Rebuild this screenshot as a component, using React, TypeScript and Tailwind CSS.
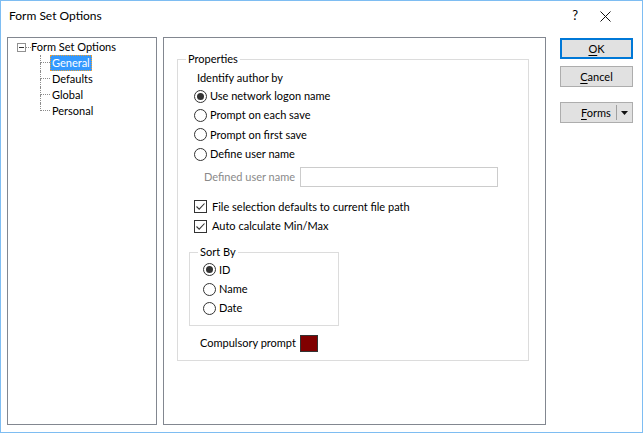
import React from "react"

const font = { fontFamily: 'Lato, "Noto Sans", sans-serif' }

function Radio({ checked, label }: { checked?: boolean; label: string }) {
  return (
    <div className="flex h-[19.4px] items-center">
      <span className="flex h-[13px] w-[13px] items-center justify-center rounded-full border border-[#333333] bg-white">
        {checked && <span className="h-[7px] w-[7px] rounded-full bg-[#333333]" />}
      </span>
      <span className="ml-[3px]">{label}</span>
    </div>
  )
}

function Check({ label }: { label: string }) {
  return (
    <div className="flex h-[19.5px] items-center">
      <span className="flex h-[13px] w-[13px] items-center justify-center border border-[#333333] bg-white">
        <svg width="11" height="11" viewBox="0 0 11 11">
          <path d="M1.5 5.5 L4.2 8.2 L9.5 2.5" fill="none" stroke="#333333" strokeWidth="1.1" />
        </svg>
      </span>
      <span className="ml-[5px]">{label}</span>
    </div>
  )
}

function TreeChild({ label, last, selected }: { label: string; last?: boolean; selected?: boolean }) {
  return (
    <div className="flex h-[16px] items-stretch">
      <div className="flex w-[10px] flex-col">
        <div className="h-[8px] border-b border-l border-dotted border-[#8c8c8c]" />
        <div className={last ? "flex-1" : "flex-1 border-l border-dotted border-[#8c8c8c]"} />
      </div>
      <div className="flex items-center">
        {selected ? (
          <span className="border border-dotted border-[#f0a030] bg-[#3399ff] px-[1px] leading-[14px] text-white">
            {label}
          </span>
        ) : (
          <span className="px-[2px] leading-[14px]">{label}</span>
        )}
      </div>
    </div>
  )
}

export default function App() {
  return (
    <div
      className="flex h-[433px] w-[643px] flex-col border border-[#7ebdf2] bg-white text-[11px] text-black"
      style={font}
    >
      {/* title bar */}
      <div className="flex h-[30px] items-center">
        <span className="ml-[8px] text-[12px]">Form Set Options</span>
        <span className="ml-auto mr-[22px] text-[13px]">?</span>
        <svg className="mr-[31px]" width="11" height="11" viewBox="0 0 11 11">
          <path d="M0.5 0.5 L10.5 10.5 M10.5 0.5 L0.5 10.5" stroke="#111111" strokeWidth="1" />
        </svg>
      </div>

      <div className="flex flex-1 pb-[7px] pl-[6px] pt-[6px]">
        {/* tree */}
        <div className="w-[150px] border border-[#828790] pt-[1px]">
          <div className="flex h-[16px] items-center pl-[9px]">
            <span className="flex h-[9px] w-[9px] items-center justify-center border border-[#919191] bg-white">
              <span className="h-px w-[5px] bg-[#333333]" />
            </span>
            <span className="w-[5px] border-t border-dotted border-[#8c8c8c]" />
            <span className="leading-[14px]">Form Set Options</span>
          </div>
          <div className="ml-[32px]">
            <TreeChild label="General" selected />
            <TreeChild label="Defaults" />
            <TreeChild label="Global" />
            <TreeChild label="Personal" last />
          </div>
        </div>

        {/* main page */}
        <div className="ml-[6px] w-[383px] border border-[#828790] pl-[13px] pt-[13px]">
          <fieldset className="w-[352px] border border-[#dcdcdc] pb-[8px] pl-[11px]">
            <legend className="ml-[-3px] px-[2px] leading-[16px]">Properties</legend>
            <div className="ml-[8px] mt-[3px] leading-[16px]">Identify author by</div>
            <div className="ml-[5px] mt-[0.5px]">
              <Radio checked label="Use network logon name" />
              <Radio label="Prompt on each save" />
              <Radio label="Prompt on first save" />
              <Radio label="Define user name" />
            </div>
            <div className="ml-[15px] mt-[3px] flex h-[20px] items-center">
              <span className="w-[96px] whitespace-nowrap text-[#8a8a8a]">Defined user name</span>
              <span className="h-[20px] w-[198px] border border-[#cccccc] bg-white" />
            </div>
            <div className="ml-[5px] mt-[10px]">
              <Check label="File selection defaults to current file path" />
              <Check label="Auto calculate Min/Max" />
            </div>
            <fieldset className="mt-[8px] w-[150px] border border-[#dcdcdc] pb-[7px] pl-[13px]">
              <legend className="ml-[-5px] px-[2px] leading-[16px]">Sort By</legend>
              <Radio checked label="ID" />
              <Radio label="Name" />
              <Radio label="Date" />
            </fieldset>
            <div className="ml-[11px] mt-[9px] flex h-[17px] items-center">
              <span className="w-[100px] whitespace-nowrap">Compulsory prompt</span>
              <span className="h-[17px] w-[18px] border border-[#333333] bg-[#800000]" />
            </div>
          </fieldset>
        </div>

        {/* buttons */}
        <div className="ml-[14px] flex w-[73px] flex-col pt-[1px]">
          <button className="h-[21px] border-2 border-[#0078d7] bg-[#e1e1e1] leading-none">
            <span className="underline underline-offset-2">O</span>K
          </button>
          <button className="mt-[7px] h-[21px] border border-[#adadad] bg-[#e1e1e1] leading-none">
            <span className="underline underline-offset-2">C</span>ancel
          </button>
          <button className="mt-[15px] flex h-[21px] items-center border border-[#adadad] bg-[#e1e1e1] leading-none">
            <span className="ml-[20px]">
              <span className="underline underline-offset-2">F</span>orms
            </span>
            <span className="ml-auto h-[15px] w-px bg-[#a0a0a0]" />
            <svg className="mx-[4px]" width="7" height="4" viewBox="0 0 7 4">
              <path d="M0 0 L7 0 L3.5 4 Z" fill="#111111" />
            </svg>
          </button>
        </div>
      </div>
    </div>
  )
}
